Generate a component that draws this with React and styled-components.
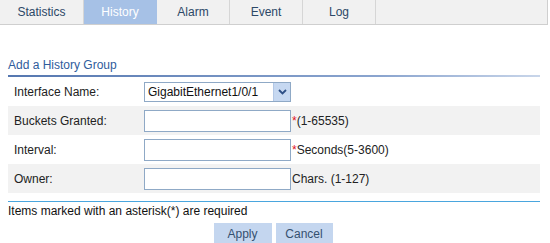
import React from 'react';
import styled, { createGlobalStyle } from 'styled-components';

const GlobalStyle = createGlobalStyle`
  body {
    margin: 0;
    background: #ffffff;
    font-family: "Liberation Sans", Arial, sans-serif;
    font-size: 12px;
    color: #222;
  }
`;

const Page = styled.div`
  width: 550px;
  height: 243px;
  overflow: hidden;
`;

const TabBar = styled.div`
  display: flex;
  width: 547px;
  height: 24px;
  background: #f1f1f1;
  border-bottom: 1px solid #cfcfcf;
  border-right: 1px solid #cfcfcf;
`;

const Tab = styled.div`
  width: ${(p) => p.$w || 73}px;
  display: flex;
  align-items: center;
  justify-content: center;
  font-size: 12px;
  color: ${(p) => (p.$active ? '#ffffff' : '#2c4867')};
  background: ${(p) => (p.$active ? '#a6c1e6' : 'transparent')};
  border-right: 1px solid ${(p) => (p.$active ? '#a6c1e6' : '#d6d6d6')};
  box-sizing: border-box;
`;

const Section = styled.div`
  margin: 33px 10px 0 8px;
`;

const Title = styled.div`
  color: #2f5c9c;
  font-size: 12px;
  line-height: 15px;
  padding-bottom: 2px;
  border-bottom: 2px solid transparent;
  border-image: linear-gradient(to right, #5577b0, #8ba5cf 70%, #c9d6ea) 1;
`;

const Row = styled.div`
  display: flex;
  align-items: center;
  height: 29px;
  background: ${(p) => (p.$shade ? '#f2f2f2' : '#ffffff')};
`;

const Label = styled.div`
  width: 136px;
  padding-left: 6px;
  box-sizing: border-box;
  color: #222;
`;

const Input = styled.input`
  width: 147px;
  height: 22px;
  box-sizing: border-box;
  border: 1px solid #8fa9c6;
  background: #fff;
  margin: 0;
  padding: 0 3px;
  font-family: inherit;
  font-size: 12px;
`;

const Select = styled.div`
  display: flex;
  width: 147px;
  height: 20px;
  box-sizing: border-box;
  border: 1px solid #8fa9c6;
  background: #fff;
`;

const SelectText = styled.div`
  flex: 1;
  display: flex;
  align-items: center;
  padding-left: 3px;
  color: #111;
`;

const SelectButton = styled.div`
  width: 16px;
  display: flex;
  align-items: center;
  justify-content: center;
  background: #c6d8f1;
  border-left: 1px solid #b3c8e6;
`;

const Hint = styled.span`
  margin-left: 1px;
  color: #222;
`;

const Star = styled.span`
  color: #e0141e;
`;

const Footer = styled.div`
  margin: 8px 10px 0 8px;
  border-top: 1px solid #4aa6de;
  padding-top: 2px;
  line-height: 15px;
  color: #111;
`;

const Buttons = styled.div`
  display: flex;
  justify-content: center;
  gap: 4px;
  margin-top: 4px;
  padding-right: 4px;
`;

const Button = styled.button`
  width: ${(p) => p.$w}px;
  height: 22px;
  border: none;
  background: #c4d6ef;
  color: #35506f;
  font-family: inherit;
  font-size: 12px;
  padding: 0;
`;

const Chevron = () => (
  <svg width="9" height="6" viewBox="0 0 9 6">
    <path d="M1 1 L4.5 4.5 L8 1" fill="none" stroke="#2d4f86" strokeWidth="1.8" />
  </svg>
);

const tabs = [
  { name: 'Statistics', w: 84 },
  { name: 'History', active: true },
  { name: 'Alarm' },
  { name: 'Event' },
  { name: 'Log' },
];

export default function App() {
  return (
    <Page>
      <GlobalStyle />
      <TabBar>
        {tabs.map((t) => (
          <Tab key={t.name} $w={t.w} $active={t.active}>
            {t.name}
          </Tab>
        ))}
      </TabBar>
      <Section>
        <Title>Add a History Group</Title>
        <Row>
          <Label>Interface Name:</Label>
          <Select>
            <SelectText>GigabitEthernet1/0/1</SelectText>
            <SelectButton>
              <Chevron />
            </SelectButton>
          </Select>
        </Row>
        <Row $shade>
          <Label>Buckets Granted:</Label>
          <Input />
          <Hint>
            <Star>*</Star>(1-65535)
          </Hint>
        </Row>
        <Row>
          <Label>Interval:</Label>
          <Input />
          <Hint>
            <Star>*</Star>Seconds(5-3600)
          </Hint>
        </Row>
        <Row $shade>
          <Label>Owner:</Label>
          <Input />
          <Hint>Chars. (1-127)</Hint>
        </Row>
      </Section>
      <Footer>Items marked with an asterisk(*) are required</Footer>
      <Buttons>
        <Button $w={58}>Apply</Button>
        <Button $w={57}>Cancel</Button>
      </Buttons>
    </Page>
  );
}
